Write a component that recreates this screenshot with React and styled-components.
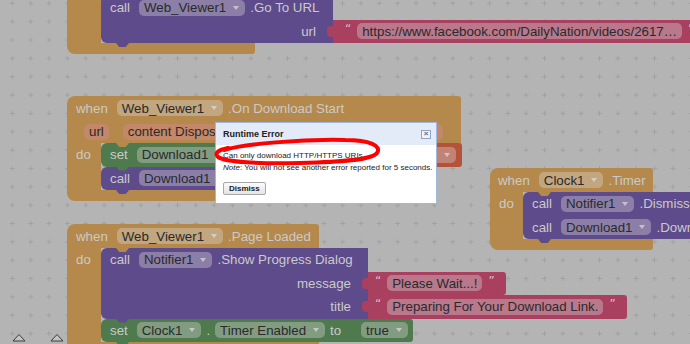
import React from "react";
import styled, { createGlobalStyle } from "styled-components";

const tones = {
  orange: "#b5894b",
  purple: "#5e4b8b",
  pink: "#a9405f",
  green: "#4e7a4e",
  red: "#b4523a",
};

const GlobalStyle = createGlobalStyle`
  html, body {
    margin: 0;
    padding: 0;
    background: #b4b4b4;
  }
  body {
    font-family: "Liberation Sans", Arial, sans-serif;
  }
`;

const Workspace = styled.div`
  position: relative;
  width: 690px;
  height: 344px;
  overflow: hidden;
  background: #b4b4b4;
`;

const GridLayer = styled.svg`
  position: absolute;
  inset: 0;
  width: 100%;
  height: 100%;
`;

const EventBlock = styled.div`
  position: absolute;
  left: ${(p) => p.$x}px;
  top: ${(p) => p.$y}px;
  display: flex;
  flex-direction: column;
  align-items: flex-start;
`;

const Header = styled.div`
  position: relative;
  width: ${(p) => p.$w}px;
  background: ${tones.orange};
  border-radius: 8px 3px 0 0;

  &::after {
    content: "";
    position: absolute;
    left: ${(p) => p.$do + 15}px;
    bottom: -4px;
    width: 13px;
    height: 4px;
    background: ${tones.orange};
    clip-path: polygon(0 0, 100% 0, 75% 100%, 25% 100%);
    z-index: 1;
  }
`;

const HeaderRow = styled.div`
  display: flex;
  align-items: center;
  gap: ${(p) => p.$gap ?? 5}px;
  box-sizing: border-box;
  height: ${(p) => p.$h ?? 24}px;
  padding: 0 ${(p) => p.$pr ?? 10}px 0 ${(p) => p.$pl ?? 9}px;
`;

const Body = styled.div`
  display: flex;
  align-items: stretch;
`;

const DoCol = styled.div`
  box-sizing: border-box;
  width: ${(p) => p.$w}px;
  padding-left: 9px;
  background: ${tones.orange};
  flex-shrink: 0;
`;

const DoLabel = styled.div`
  height: 23.5px;
  line-height: 23.5px;
  color: #cacaca;
  font-size: 13.3px;
`;

const Stack = styled.div`
  display: flex;
  flex-direction: column;
`;

const Foot = styled.div`
  width: ${(p) => p.$w}px;
  height: 10.5px;
  background: ${tones.orange};
  border-radius: 0 0 3px 8px;
`;

const Statement = styled.div`
  position: relative;
  display: flex;
  flex-direction: column;

  &::after {
    content: "";
    position: absolute;
    left: 15px;
    bottom: -4px;
    width: 13px;
    height: 4px;
    background: ${(p) => tones[p.$tone]};
    clip-path: polygon(0 0, 100% 0, 75% 100%, 25% 100%);
    z-index: 1;
  }
`;

const Row = styled.div`
  display: flex;
  align-items: flex-start;
`;

const Seg = styled.div`
  display: flex;
  align-items: center;
  justify-content: ${(p) => (p.$end ? "flex-end" : "flex-start")};
  gap: 5px;
  box-sizing: border-box;
  width: ${(p) => p.$w}px;
  height: 23.5px;
  padding: 0 17px 0 9px;
  background: ${(p) => tones[p.$tone]};
  border-top-left-radius: ${(p) => (p.$first ? 6 : 0)}px;
  border-bottom-left-radius: ${(p) => (p.$last ? 6 : 0)}px;
  flex-shrink: 0;
`;

const Value = styled.div`
  position: relative;
  display: flex;
  align-items: center;
  justify-content: ${(p) => (p.$end ? "flex-end" : "flex-start")};
  gap: ${(p) => p.$gap ?? 6}px;
  box-sizing: border-box;
  width: ${(p) => (p.$w ? `${p.$w}px` : "auto")};
  height: 23.5px;
  padding: 0 ${(p) => p.$pr ?? 11}px 0 ${(p) => p.$pl ?? 7}px;
  background: ${(p) => tones[p.$tone]};
  border-radius: 0 3px 3px 0;
  flex-shrink: 0;

  &::before {
    content: "";
    position: absolute;
    left: -6px;
    top: 6px;
    width: 7px;
    height: 11px;
    background: ${(p) => tones[p.$tone]};
    border-radius: 4px 0 0 4px;
  }
`;

const Label = styled.span`
  color: #cacaca;
  font-size: 13.3px;
  white-space: nowrap;
  margin-right: ${(p) => (p.$kw ? 4 : 0)}px;
`;

const Pill = styled.span`
  display: inline-flex;
  align-items: center;
  justify-content: ${(p) => (p.$end ? "flex-end" : "flex-start")};
  box-sizing: border-box;
  height: 16px;
  min-width: ${(p) => (p.$min ? `${p.$min}px` : "0")};
  padding: 0 ${(p) => (p.$caret ? 6 : 5)}px 0 5px;
  border-radius: 5px;
  background: rgba(214, 214, 214, 0.38);
  color: #2a2a2a;
  font-size: 13.3px;
  white-space: nowrap;
  flex-shrink: 0;
  flex-grow: ${(p) => (p.$grow ? 1 : 0)};
  overflow: hidden;
`;

const ParamPill = styled(Pill)`
  background: #c3876a;
  padding: 0 5px;
`;

const Caret = styled.span`
  margin-left: 7px;
  width: 0;
  height: 0;
  border-left: 3px solid transparent;
  border-right: 3px solid transparent;
  border-top: 4px solid rgba(228, 228, 228, 0.65);
`;

const Quote = styled.span`
  align-self: flex-start;
  margin-top: 3px;
  color: #dcbcc6;
  font-size: 12px;
  line-height: 1;
  font-family: "DejaVu Sans", sans-serif;
`;

const Drop = ({ children, min, end }) => (
  <Pill $caret $min={min} $end={end}>
    {children}
    <Caret />
  </Pill>
);

const Text = ({ children, w, pl, pr }) => (
  <Value $tone="pink" $w={w} $pl={pl} $pr={pr}>
    <Quote>“</Quote>
    <Pill>{children}</Pill>
    <Quote>”</Quote>
  </Value>
);

/* error dialog */

const Dialog = styled.div`
  position: absolute;
  left: 215px;
  top: 122px;
  box-sizing: border-box;
  width: 222px;
  height: 82px;
  background: #ffffff;
  border: 1px solid #9fb8dc;
  font-family: "Liberation Sans", Arial, sans-serif;
  color: #222;
`;

const DialogTitle = styled.div`
  display: flex;
  align-items: center;
  justify-content: space-between;
  height: 22px;
  padding: 0 5px 0 7px;
  background: #e2ebf7;
  font-size: 9px;
  font-weight: bold;
`;

const CloseBox = styled.span`
  display: flex;
  align-items: center;
  justify-content: center;
  box-sizing: border-box;
  width: 10px;
  height: 9px;
  border: 1px solid #8fa6c6;
  background: #eef3fa;
  color: #566d8e;
  font-size: 8px;
  line-height: 1;
`;

const DialogBody = styled.div`
  padding: 5px 7px 0 7px;
  font-size: 8px;
  line-height: 12px;
  white-space: nowrap;
`;

const DismissButton = styled.button`
  margin-top: 8px;
  height: 13px;
  padding: 0 5px;
  border: 1px solid #a8a8a8;
  border-radius: 2px;
  background: linear-gradient(#fbfbfb, #e4e4e4);
  font-family: "Liberation Sans", Arial, sans-serif;
  font-size: 8px;
  font-weight: bold;
  line-height: 11px;
  color: #222;
`;

const Annotation = styled.svg`
  position: absolute;
  inset: 0;
  width: 100%;
  height: 100%;
  pointer-events: none;
`;

const Grid = () => (
  <GridLayer>
    <defs>
      <pattern id="plus" x="3.125" y="-5.875" width="18.35" height="18.35" patternUnits="userSpaceOnUse">
        <path d="M6.7 9.2h5M9.2 6.7v5" stroke="#a1a1a1" strokeWidth="1" />
      </pattern>
    </defs>
    <rect width="690" height="344" fill="url(#plus)" />
    <polygon points="13,341 19,334.5 25,341" fill="#c4c4c4" stroke="#3c3c3c" strokeWidth="1" />
    <polygon points="51,341 57,334.5 63,341" fill="#c4c4c4" stroke="#3c3c3c" strokeWidth="1" />
  </GridLayer>
);

export default function App() {
  return (
    <>
      <GlobalStyle />
      <Workspace>
        <Grid />

        {/* when ... do: call Web_Viewer1.GoToUrl */}
        <EventBlock $x={67} $y={-28}>
          <Header $w={300} $do={34}>
            <HeaderRow />
          </Header>
          <Body>
            <DoCol $w={34} />
            <Stack>
              <Statement $tone="purple">
                <Row>
                  <Seg $tone="purple" $w={232} $first>
                    <Label $kw>call</Label>
                    <Drop>Web_Viewer1</Drop>
                    <Label>.Go To URL</Label>
                  </Seg>
                </Row>
                <Row>
                  <Seg $tone="purple" $w={232} $end $last>
                    <Label>url</Label>
                  </Seg>
                  <Text pl={12}>https://www.facebook.com/DailyNation/videos/2617…</Text>
                </Row>
              </Statement>
            </Stack>
          </Body>
          <Foot $w={188} />
        </EventBlock>

        {/* when Web_Viewer1.OnDownloadStart */}
        <EventBlock $x={67} $y={96}>
          <Header $w={394} $do={34}>
            <HeaderRow>
              <Label $kw>when</Label>
              <Drop>Web_Viewer1</Drop>
              <Label>.On Download Start</Label>
            </HeaderRow>
            <HeaderRow $h={23} $pl={17} $pr={18} $gap={14}>
              <ParamPill>url</ParamPill>
              <ParamPill>content Disposition</ParamPill>
              <ParamPill $grow>mimetype</ParamPill>
            </HeaderRow>
          </Header>
          <Body>
            <DoCol $w={34}>
              <DoLabel>do</DoLabel>
            </DoCol>
            <Stack>
              <Statement $tone="green">
                <Row>
                  <Seg $tone="green" $w={299} $first $last>
                    <Label $kw>set</Label>
                    <Drop>Download1</Drop>
                  </Seg>
                  <Value $tone="red" $w={62} $end $pr={6}>
                    <Drop min={48} end />
                  </Value>
                </Row>
              </Statement>
              <Statement $tone="purple">
                <Row>
                  <Seg $tone="purple" $w={300} $first $last>
                    <Label $kw>call</Label>
                    <Drop>Download1</Drop>
                  </Seg>
                </Row>
              </Statement>
            </Stack>
          </Body>
          <Foot $w={150} />
        </EventBlock>

        {/* when Clock1.Timer */}
        <EventBlock $x={490} $y={168}>
          <Header $w={163} $do={33}>
            <HeaderRow $pl={8}>
              <Label $kw>when</Label>
              <Drop>Clock1</Drop>
              <Label>.Timer</Label>
            </HeaderRow>
          </Header>
          <Body>
            <DoCol $w={33} $pl={8}>
              <DoLabel>do</DoLabel>
            </DoCol>
            <Stack>
              <Statement $tone="purple">
                <Row>
                  <Seg $tone="purple" $w={220} $first>
                    <Label $kw>call</Label>
                    <Drop>Notifier1</Drop>
                    <Label>.Dismiss</Label>
                  </Seg>
                </Row>
              </Statement>
              <Statement $tone="purple">
                <Row>
                  <Seg $tone="purple" $w={220} $last>
                    <Label $kw>call</Label>
                    <Drop>Download1</Drop>
                    <Label>.Download</Label>
                  </Seg>
                </Row>
              </Statement>
            </Stack>
          </Body>
          <Foot $w={163} />
        </EventBlock>

        {/* when Web_Viewer1.PageLoaded */}
        <EventBlock $x={67} $y={224}>
          <Header $w={252} $do={34}>
            <HeaderRow>
              <Label $kw>when</Label>
              <Drop>Web_Viewer1</Drop>
              <Label>.Page Loaded</Label>
            </HeaderRow>
          </Header>
          <Body>
            <DoCol $w={34}>
              <DoLabel>do</DoLabel>
            </DoCol>
            <Stack>
              <Statement $tone="purple">
                <Row>
                  <Seg $tone="purple" $w={267} $first>
                    <Label $kw>call</Label>
                    <Drop>Notifier1</Drop>
                    <Label>.Show Progress Dialog</Label>
                  </Seg>
                </Row>
                <Row>
                  <Seg $tone="purple" $w={267} $end>
                    <Label>message</Label>
                  </Seg>
                  <Text>Please Wait...!</Text>
                </Row>
                <Row>
                  <Seg $tone="purple" $w={267} $end $last>
                    <Label>title</Label>
                  </Seg>
                  <Text>Preparing For Your Download Link.</Text>
                </Row>
              </Statement>
              <Statement $tone="green">
                <Row>
                  <Seg $tone="green" $w={255} $first $last>
                    <Label $kw>set</Label>
                    <Drop>Clock1</Drop>
                    <Label>.</Label>
                    <Drop>Timer Enabled</Drop>
                    <Label>to</Label>
                  </Seg>
                  <Value $tone="green" $pl={5} $pr={5}>
                    <Drop>true</Drop>
                  </Value>
                </Row>
              </Statement>
            </Stack>
          </Body>
          <Foot $w={252} />
        </EventBlock>

        <Dialog>
          <DialogTitle>
            <span>Runtime Error</span>
            <CloseBox>×</CloseBox>
          </DialogTitle>
          <DialogBody>
            <div>Can only download HTTP/HTTPS URIs.</div>
            <div>
              <i>Note</i>: You will not see another error reported for 5 seconds.
            </div>
            <DismissButton>Dismiss</DismissButton>
          </DialogBody>
        </Dialog>

        <Annotation>
          <path
            d="M224 150 C245 144, 300 139, 345 140 C370 140, 382 146, 377 153 C372 160, 340 162, 300 163 C260 164, 225 162, 218 157 C214 153, 218 150, 228 148"
            fill="none"
            stroke="#ff0000"
            strokeWidth="4"
            strokeLinecap="round"
          />
        </Annotation>
      </Workspace>
    </>
  );
}
